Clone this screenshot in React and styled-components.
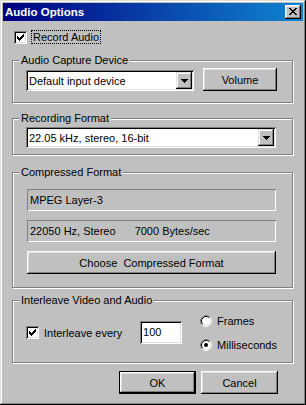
import React from 'react';
import styled, { createGlobalStyle } from 'styled-components';

const GlobalStyle = createGlobalStyle`
  html, body {
    margin: 0;
    padding: 0;
    background: #c0c0c0;
  }
  body {
    font-family: "Liberation Sans", Arial, sans-serif;
    font-size: 11px;
    color: #000;
  }
  * {
    box-sizing: border-box;
  }
`;

const raised = `
  box-shadow: inset -1px -1px #000, inset 1px 1px #fff, inset -2px -2px #808080, inset 2px 2px #dfdfdf;
`;
const sunken = `
  box-shadow: inset 1px 1px #808080, inset -1px -1px #fff, inset 2px 2px #000, inset -2px -2px #dfdfdf;
`;

const Window = styled.div`
  width: 306px;
  height: 405px;
  padding: 3px;
  background: #c0c0c0;
  box-shadow: inset -1px -1px #000, inset 1px 1px #dfdfdf, inset -2px -2px #808080, inset 2px 2px #fff;
  display: flex;
  flex-direction: column;
`;

const TitleBar = styled.div`
  height: 18px;
  display: flex;
  align-items: center;
  justify-content: space-between;
  padding: 0 2px;
  background: linear-gradient(to right, #000080, #1084d0);
`;

const Title = styled.span`
  color: #fff;
  font-weight: bold;
  font-size: 11.5px;
  line-height: 18px;
`;

const CloseButton = styled.div`
  width: 16px;
  height: 14px;
  background: #c0c0c0;
  ${raised}
  display: flex;
  align-items: center;
  justify-content: center;
  padding: 0 1px 1px 0;
`;

const Body = styled.div`
  flex: 1;
  display: flex;
  flex-direction: column;
  padding: 9px 10px 0 9px;
`;

const TopCheck = styled.div`
  display: flex;
  align-items: center;
  height: 14px;
  margin-left: 2px;
`;

const FocusLabel = styled.span`
  margin-left: 4px;
  padding: 0 1px;
  height: 14px;
  line-height: 12px;
  border: 1px dotted #000;
`;

const Box = styled.span`
  width: 13px;
  height: 13px;
  flex-shrink: 0;
  background: #fff;
  ${sunken}
  display: inline-flex;
  align-items: center;
  justify-content: center;
`;

const Group = styled.fieldset`
  margin: ${p => p.$top}px 0 0 0;
  padding: 0;
  border: 1px solid #808080;
  box-shadow: inset 1px 1px #fff, 1px 1px #fff;
  min-width: 0;
`;

const Legend = styled.legend`
  margin-left: 6px;
  padding: 0 2px;
  line-height: 13px;
  background: #c0c0c0;
`;

const GroupBody = styled.div`
  padding: ${p => p.$pad};
`;

const Row = styled.div`
  display: flex;
  align-items: ${p => p.$align || 'center'};
  justify-content: ${p => p.$justify || 'flex-start'};
`;

const Stack = styled.div`
  display: flex;
  flex-direction: column;
  gap: ${p => p.$gap}px;
`;

const Combo = styled.div`
  width: ${p => p.$w}px;
  height: 21px;
  background: #fff;
  ${sunken}
  display: flex;
  align-items: center;
  padding: 2px;
`;

const ComboText = styled.span`
  flex: 1;
  padding-left: 1px;
  white-space: nowrap;
  overflow: hidden;
`;

const DropButton = styled.div`
  width: 16px;
  height: 17px;
  background: #c0c0c0;
  box-shadow: inset -1px -1px #000, inset 1px 1px #dfdfdf, inset -2px -2px #808080, inset 2px 2px #fff;
  display: flex;
  align-items: center;
  justify-content: center;
  padding-top: 1px;
`;

const Button = styled.button`
  width: ${p => p.$w}px;
  height: 23px;
  margin: 0;
  padding: 0;
  border: none;
  background: #c0c0c0;
  font: inherit;
  color: #000;
  white-space: pre;
  ${p => p.$default
    ? 'box-shadow: inset 0 0 0 1px #000, inset -2px -2px #000, inset 2px 2px #fff, inset -3px -3px #808080, inset 3px 3px #dfdfdf;'
    : raised}
`;

const StaticField = styled.div`
  width: 249px;
  height: 22px;
  padding-left: 3px;
  display: flex;
  align-items: center;
  white-space: nowrap;
  box-shadow: inset 1px 1px #808080, inset -1px -1px #fff;
`;

const Spacer = styled.span`
  display: inline-block;
  width: ${p => p.$w}px;
`;

const CheckLabel = styled.div`
  width: ${p => p.$w}px;
  display: flex;
  align-items: center;
  gap: 5px;
`;

const Edit = styled.div`
  width: 43px;
  height: 23px;
  background: #fff;
  ${sunken}
  padding: 2px 3px;
  line-height: 18px;
`;

const RadioColumn = styled(Stack)`
  margin-left: 18px;
`;

const RadioLabel = styled.div`
  display: flex;
  align-items: center;
  gap: 5px;
  height: 13px;
`;

const ButtonBar = styled.div`
  display: flex;
  justify-content: flex-end;
  gap: 5px;
  margin-top: 8px;
  padding-right: 15px;
`;

const CheckMark = () => (
  <svg width="7" height="7" viewBox="0 0 7 7" shapeRendering="crispEdges">
    <path
      fill="#000"
      d="M6 0h1v1H6z M5 1h2v1H5z M0 2h1v1H0z M4 2h3v1H4z M0 3h2v1H0z M3 3h3v1H3z M0 4h5v1H0z M1 5h3v1H1z M2 6h1v1H2z"
    />
  </svg>
);

const CheckBox = ({ checked }) => <Box>{checked && <CheckMark />}</Box>;

const Arrow = () => (
  <svg width="7" height="4" viewBox="0 0 7 4" shapeRendering="crispEdges">
    <path fill="#000" d="M0 0h7v1H0z M1 1h5v1H1z M2 2h3v1H2z M3 3h1v1H3z" />
  </svg>
);

const Radio = ({ checked }) => (
  <svg width="12" height="12" viewBox="0 0 12 12">
    <circle cx="6" cy="6" r="5" fill="#fff" />
    <path d="M2.11 9.89 A5.5 5.5 0 0 1 9.89 2.11" stroke="#808080" fill="none" />
    <path d="M9.89 2.11 A5.5 5.5 0 0 1 2.11 9.89" stroke="#fff" fill="none" />
    <path d="M2.82 9.18 A4.5 4.5 0 0 1 9.18 2.82" stroke="#000" fill="none" />
    <path d="M9.18 2.82 A4.5 4.5 0 0 1 2.82 9.18" stroke="#dfdfdf" fill="none" />
    {checked && <circle cx="6" cy="6" r="2" fill="#000" />}
  </svg>
);

const ComboBox = ({ width, children }) => (
  <Combo $w={width}>
    <ComboText>{children}</ComboText>
    <DropButton>
      <Arrow />
    </DropButton>
  </Combo>
);

export default function App() {
  return (
    <>
      <GlobalStyle />
      <Window>
        <TitleBar>
          <Title>Audio Options</Title>
          <CloseButton>
            <svg width="8" height="7" viewBox="0 0 8 7" shapeRendering="crispEdges">
              <path
                fill="#000"
                d="M0 0h2v1H0z M6 0h2v1H6z M1 1h2v1H1z M5 1h2v1H5z M2 2h4v1H2z M3 3h2v1H3z M2 4h4v1H2z M1 5h2v1H1z M5 5h2v1H5z M0 6h2v1H0z M6 6h2v1H6z"
              />
            </svg>
          </CloseButton>
        </TitleBar>

        <Body>
          <TopCheck>
            <CheckBox checked />
            <FocusLabel>Record Audio</FocusLabel>
          </TopCheck>

          <Group $top={10}>
            <Legend>Audio Capture Device</Legend>
            <GroupBody $pad="1px 15px 11px 13px">
              <Row $justify="space-between" $align="flex-end">
                <ComboBox width={168}>Default input device</ComboBox>
                <Button $w={74}>Volume</Button>
              </Row>
            </GroupBody>
          </Group>

          <Group $top={9}>
            <Legend>Recording Format</Legend>
            <GroupBody $pad="2px 15px 6px 13px">
              <ComboBox width={250}>22.05 kHz, stereo, 16-bit</ComboBox>
            </GroupBody>
          </Group>

          <Group $top={11}>
            <Legend>Compressed Format</Legend>
            <GroupBody $pad="10px 15px 13px 14px">
              <Stack $gap={9}>
                <StaticField>MPEG Layer-3</StaticField>
                <StaticField>
                  22050 Hz, Stereo
                  <Spacer $w={19} />
                  7000 Bytes/sec
                </StaticField>
                <Button $w={249}>Choose  Compressed Format</Button>
              </Stack>
            </GroupBody>
          </Group>

          <Group $top={6}>
            <Legend>Interleave Video and Audio</Legend>
            <GroupBody $pad="7px 15px 11px 13px">
              <Row>
                <CheckLabel $w={117}>
                  <CheckBox checked />
                  <span>Interleave every</span>
                </CheckLabel>
                <Edit>100</Edit>
                <RadioColumn $gap={11}>
                  <RadioLabel>
                    <Radio />
                    Frames
                  </RadioLabel>
                  <RadioLabel>
                    <Radio checked />
                    Milliseconds
                  </RadioLabel>
                </RadioColumn>
              </Row>
            </GroupBody>
          </Group>

          <ButtonBar>
            <Button $w={77} $default>OK</Button>
            <Button $w={77}>Cancel</Button>
          </ButtonBar>
        </Body>
      </Window>
    </>
  );
}
